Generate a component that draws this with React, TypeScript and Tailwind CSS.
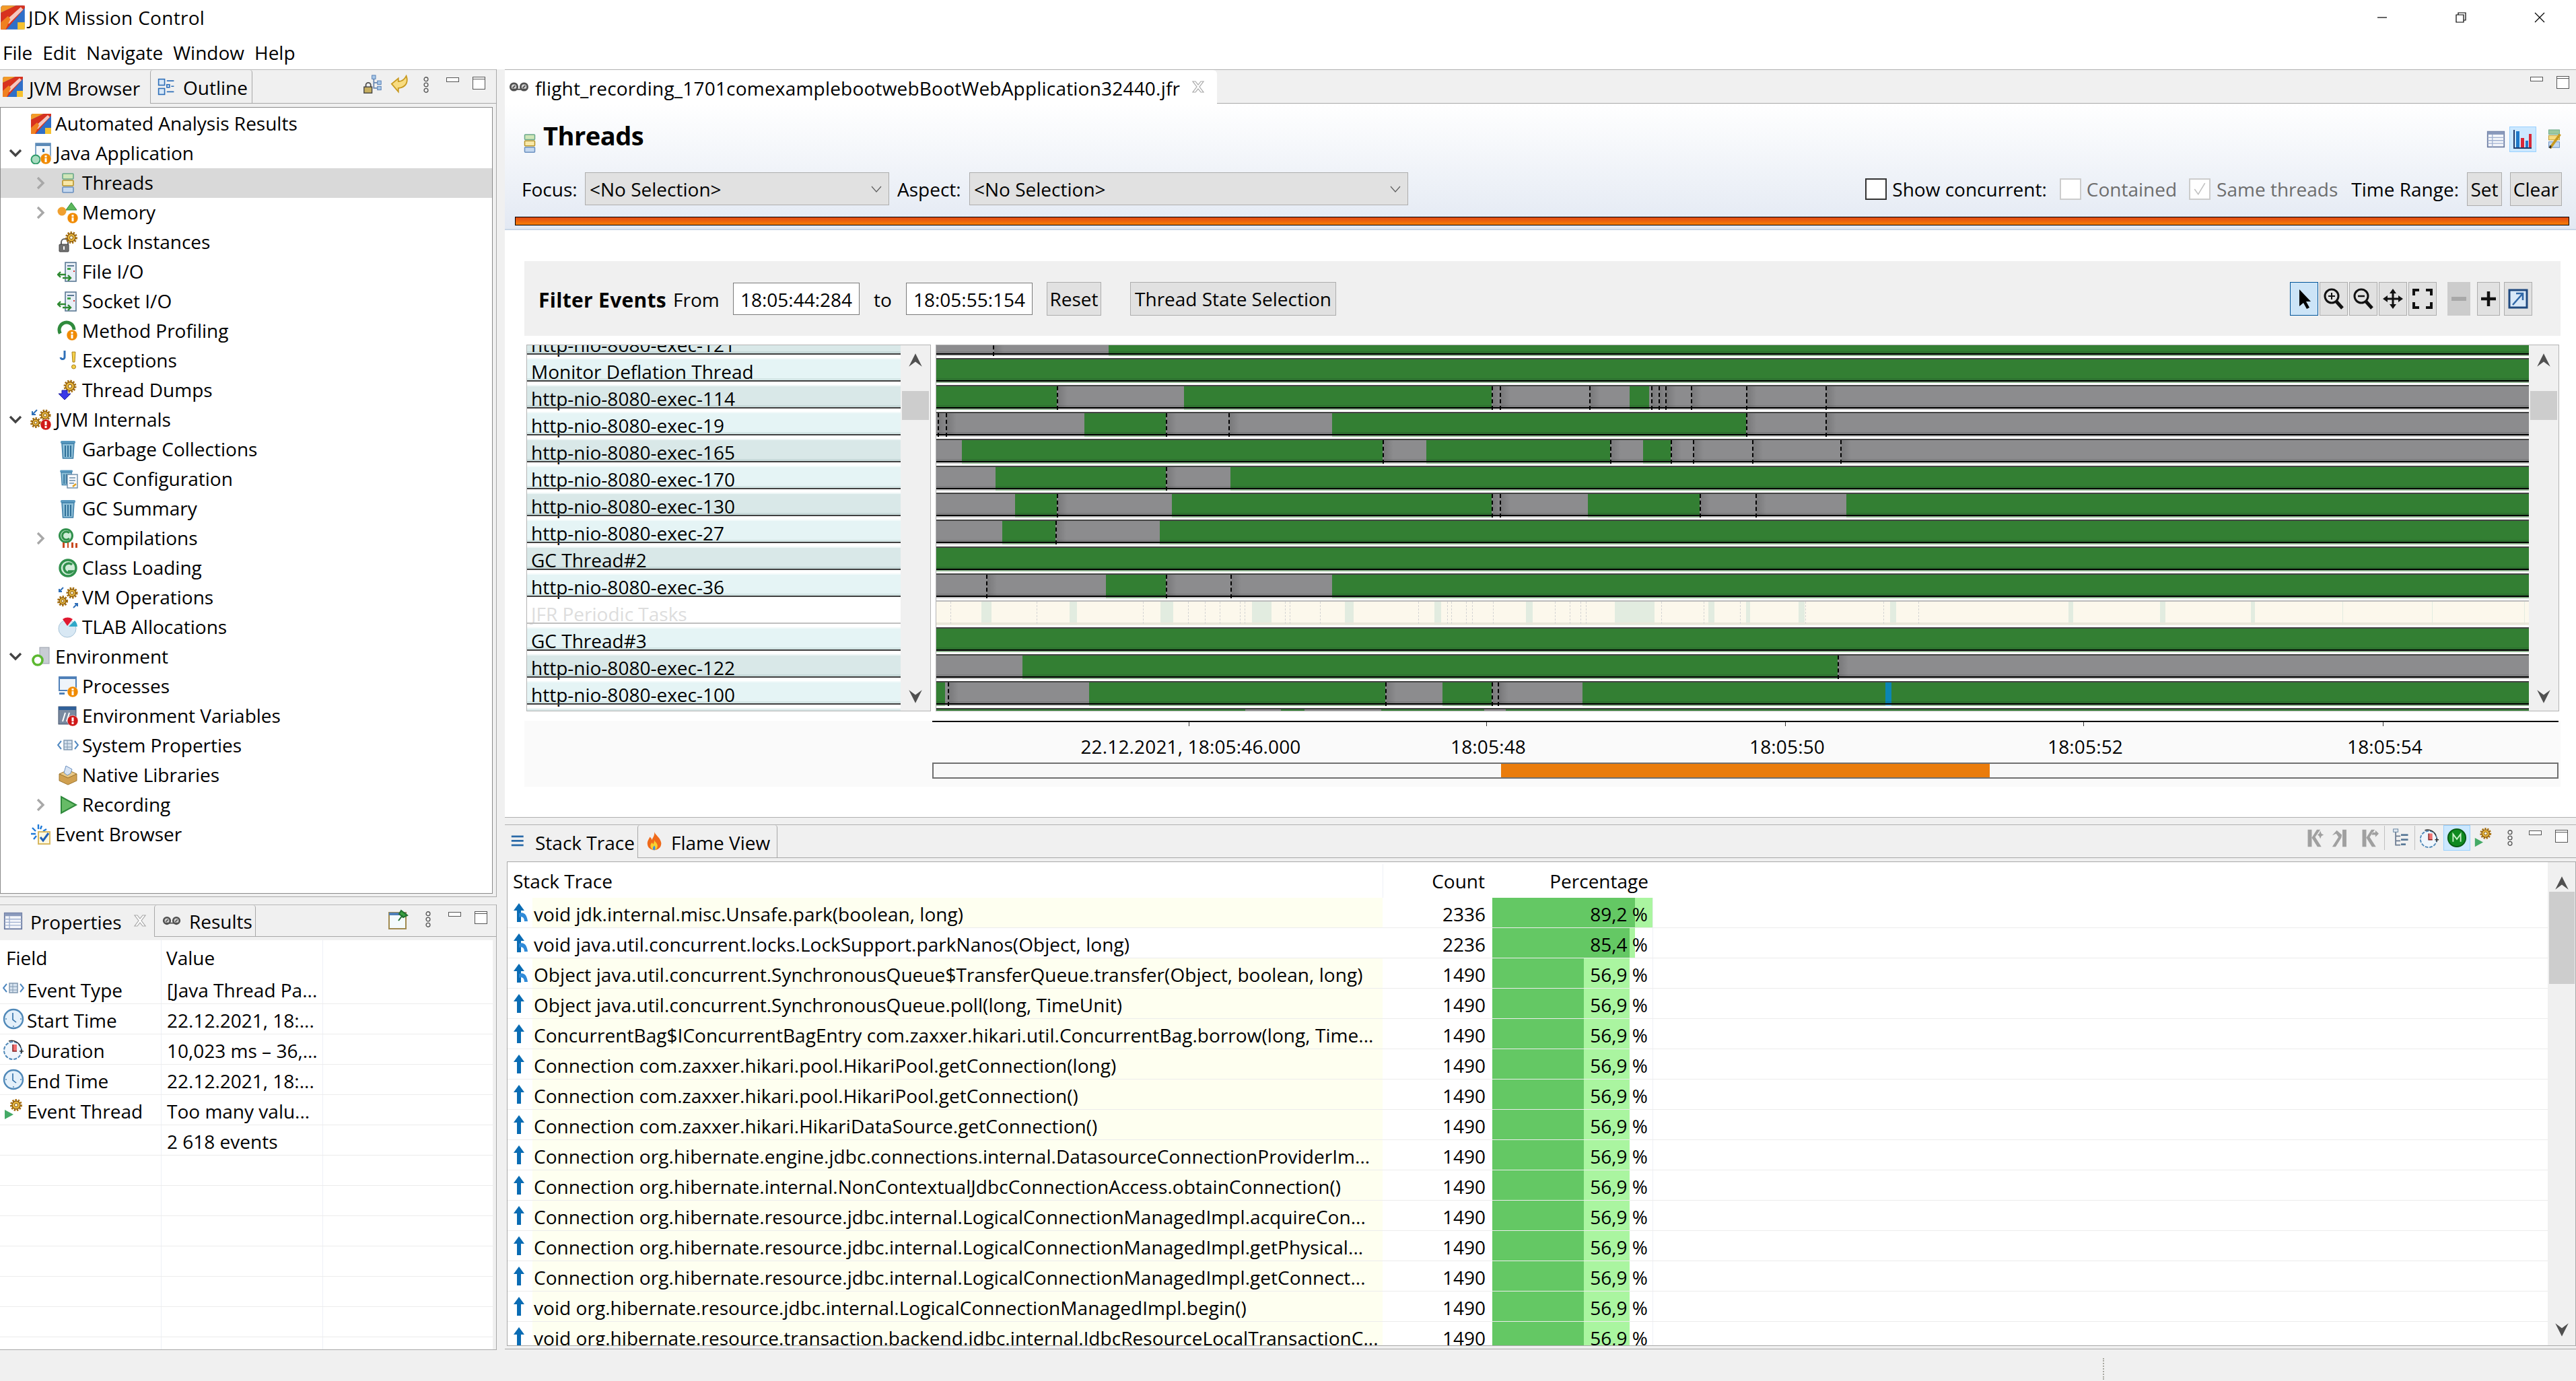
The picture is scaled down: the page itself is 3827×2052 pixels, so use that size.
import type { ReactNode } from "react";

type Kind = "g" | "a" | "b" | "c" | "s";
type ThreadRow = { name: string; segs: [Kind, number][]; ticks?: number[]; tone?: "light" | "dark" | "off" };

const CHART_START = 1391;
const CHART_END = 3757;

const fillClass: Record<Kind, string> = {
  g: "bg-[#337f33] border-b-[3px] border-[#2e7230]",
  a: "bg-[#8c8c8e] border-b-[3px] border-[#808082]",
  b: "bg-[#0b86b5] border-b-[3px] border-[#0b7aa5]",
  c: "bg-[#fcf8ec]",
  s: "bg-[#e2ece0]",
};

const fadeClass: Record<Kind, string> = {
  g: "bg-[#8fb38f]",
  a: "bg-[#c4c4c4]",
  b: "bg-[#7fc0dc]",
  c: "bg-[#eeebdd]",
  s: "bg-[#e6ebdd]",
};

const periodic: [Kind, number][] = [
  ["c", 1458], ["s", 1473], ["c", 1589], ["s", 1600], ["c", 1724], ["s", 1743], ["c", 1860], ["s", 1889],
  ["c", 1998], ["s", 2011], ["c", 2131], ["s", 2141], ["c", 2267], ["s", 2277], ["c", 2399], ["s", 2458],
  ["c", 2538], ["s", 2547], ["c", 2594], ["s", 2600], ["c", 2672], ["s", 2681], ["c", 2808], ["s", 2817],
  ["c", 3073], ["s", 3080], ["c", 3209], ["s", 3217], ["c", 3344], ["s", 3350], ["c", 3480], ["s", 3481],
  ["c", 3613], ["s", 3614], ["c", 3750], ["s", 3751], ["c", CHART_END],
];

const threads: ThreadRow[] = [
  { name: "http-nio-8080-exec-121", tone: "dark", segs: [["a", 1647], ["g", CHART_END]], ticks: [1475] },
  { name: "Monitor Deflation Thread", segs: [["g", CHART_END]] },
  {
    name: "http-nio-8080-exec-114",
    tone: "dark",
    segs: [["g", 1570], ["a", 1759], ["g", 2216], ["a", 2421], ["g", 2450], ["a", CHART_END]],
    ticks: [1570, 2216, 2228, 2361, 2453, 2464, 2474, 2512, 2594, 2712],
  },
  {
    name: "http-nio-8080-exec-19",
    segs: [["a", 1611], ["g", 1732], ["a", 1979], ["g", 2594], ["a", CHART_END]],
    ticks: [1393, 1405, 1732, 1825, 2594, 2712],
  },
  {
    name: "http-nio-8080-exec-165",
    tone: "dark",
    segs: [["a", 1429], ["g", 2054], ["a", 2119], ["g", 2392], ["a", 2441], ["g", 2482], ["a", CHART_END]],
    ticks: [2054, 2392, 2482, 2515, 2603, 2734],
  },
  { name: "http-nio-8080-exec-170", segs: [["a", 1479], ["g", 1732], ["a", 1828], ["g", CHART_END]], ticks: [1732] },
  {
    name: "http-nio-8080-exec-130",
    tone: "dark",
    segs: [["a", 1508], ["g", 1570], ["a", 1741], ["g", 2216], ["a", 2359], ["g", 2525], ["a", 2743], ["g", CHART_END]],
    ticks: [1570, 2216, 2228, 2525, 2608],
  },
  { name: "http-nio-8080-exec-27", segs: [["a", 1489], ["g", 1568], ["a", 1723], ["g", CHART_END]], ticks: [1568] },
  { name: "GC Thread#2", tone: "dark", segs: [["g", CHART_END]] },
  { name: "http-nio-8080-exec-36", segs: [["a", 1643], ["g", 1732], ["a", 1979], ["g", CHART_END]], ticks: [1465, 1732, 1828] },
  { name: "JFR Periodic Tasks", tone: "off", segs: periodic },
  { name: "GC Thread#3", segs: [["g", CHART_END]] },
  { name: "http-nio-8080-exec-122", tone: "dark", segs: [["a", 1519], ["g", 2730], ["a", CHART_END]], ticks: [2730] },
  {
    name: "http-nio-8080-exec-100",
    segs: [["g", 1404], ["a", 1618], ["g", 2058], ["a", 2143], ["g", 2216], ["a", 2351], ["g", 2801], ["b", 2810], ["g", CHART_END]],
    ticks: [1408, 2058, 2216, 2225],
  },
  {
    name: "",
    tone: "dark",
    segs: [["g", 1850], ["a", 1903], ["g", 1938], ["a", 2052], ["g", 2205], ["a", 2237], ["g", CHART_END]],
  },
];

const periodicTicks = [
  1412, 1540, 1698, 1765, 1790, 1812, 1842, 1849, 1909, 1916, 1961, 2107, 2150, 2156, 2178, 2187, 2218, 2310, 2332,
  2348, 2356, 2468, 2531, 2585, 2682, 2798, 2850,
];

const stack: [string, number, string, number, number][] = [
  ["void jdk.internal.misc.Unsafe.park(boolean, long)", 2336, "89,2", 212, 26],
  ["void java.util.concurrent.locks.LockSupport.parkNanos(Object, long)", 2236, "85,4", 204, 8],
  ["Object java.util.concurrent.SynchronousQueue$TransferQueue.transfer(Object, boolean, long)", 1490, "56,9", 136, 68],
  ["Object java.util.concurrent.SynchronousQueue.poll(long, TimeUnit)", 1490, "56,9", 136, 68],
  ["ConcurrentBag$IConcurrentBagEntry com.zaxxer.hikari.util.ConcurrentBag.borrow(long, Time...", 1490, "56,9", 136, 68],
  ["Connection com.zaxxer.hikari.pool.HikariPool.getConnection(long)", 1490, "56,9", 136, 68],
  ["Connection com.zaxxer.hikari.pool.HikariPool.getConnection()", 1490, "56,9", 136, 68],
  ["Connection com.zaxxer.hikari.HikariDataSource.getConnection()", 1490, "56,9", 136, 68],
  ["Connection org.hibernate.engine.jdbc.connections.internal.DatasourceConnectionProviderIm...", 1490, "56,9", 136, 68],
  ["Connection org.hibernate.internal.NonContextualJdbcConnectionAccess.obtainConnection()", 1490, "56,9", 136, 68],
  ["Connection org.hibernate.resource.jdbc.internal.LogicalConnectionManagedImpl.acquireCon...", 1490, "56,9", 136, 68],
  ["Connection org.hibernate.resource.jdbc.internal.LogicalConnectionManagedImpl.getPhysical...", 1490, "56,9", 136, 68],
  ["Connection org.hibernate.resource.jdbc.internal.LogicalConnectionManagedImpl.getConnect...", 1490, "56,9", 136, 68],
  ["void org.hibernate.resource.jdbc.internal.LogicalConnectionManagedImpl.begin()", 1490, "56,9", 136, 68],
  ["void org.hibernate.resource.transaction.backend.jdbc.internal.JdbcResourceLocalTransactionC...", 1490, "56,9", 136, 68],
];

const axisLabels: [number, string][] = [
  [1769, "22.12.2021, 18:05:46.000"],
  [2211, "18:05:48"],
  [2655, "18:05:50"],
  [3098, "18:05:52"],
  [3543, "18:05:54"],
];

function Info({ x = 24, y = 24, c = "#f08a00" }: { x?: number; y?: number; c?: string }) {
  const red = c !== "#f08a00";
  return (
    <g>
      <circle cx={x} cy={y} r={8} fill={c} stroke="#fff" strokeOpacity={0.5} />
      {red ? (
        <>
          <rect x={x - 1.5} y={y - 5} width={3} height={6} fill="#fff" />
          <rect x={x - 1.5} y={y + 2} width={3} height={3} fill="#fff" />
        </>
      ) : (
        <>
          <rect x={x - 1.5} y={y - 5} width={3} height={3} fill="#fff" />
          <rect x={x - 1.5} y={y - 1} width={3} height={6} fill="#fff" />
        </>
      )}
    </g>
  );
}

function Gear({ x, y, r = 6 }: { x: number; y: number; r?: number }) {
  return (
    <g>
      <circle cx={x} cy={y} r={r + 1.5} fill="none" stroke="#a8700f" strokeWidth={3} strokeDasharray="2.4 1.8" />
      <circle cx={x} cy={y} r={r} fill="#e9b83c" stroke="#8a5a10" strokeWidth={1.4} />
      <circle cx={x} cy={y} r={r / 2.4} fill="#fff6d8" stroke="#7a5010" />
    </g>
  );
}

function Trash() {
  return (
    <g>
      <rect x={5} y={3} width={22} height={4} rx={1.5} fill="#5a9ac0" />
      <path d="M7 7h18l-1.5 22h-15z" fill="#8fc0d8" stroke="#3c7ea8" strokeWidth={1.5} />
      <path d="M12 10v17M16 10v17M20 10v17" stroke="#2f6f98" strokeWidth={2} />
    </g>
  );
}

function Server() {
  return (
    <g>
      <rect x={12} y={2} width={16} height={28} fill="#e8eef6" stroke="#5a7894" strokeWidth={1.6} />
      <rect x={15} y={6} width={10} height={2} fill="#5a7894" />
      <rect x={15} y={10} width={5} height={3} fill="#3ea04a" />
      <rect x={24} y={14} width={2} height={2} fill="#d83030" />
      <path d="M1 20h12M5 16l-4 4 4 4M8 25h12M16 21l4 4-4 4" stroke="#2e8a32" strokeWidth={2.4} fill="none" />
    </g>
  );
}

function Logo() {
  return (
    <g>
      <rect x={1} y={1} width={30} height={30} rx={3} fill="#2f6fc8" />
      <path d="M1 10 20 1h-16Q1 1 1 5z" fill="#f39a28" />
      <path d="M1 10 20 1l11 0v3L8 31H1z" fill="#d8321e" />
      <path d="M7 20 26 3l3 3L11 24z" fill="#f4c8c0" />
      <path d="M22 22h9v9h-9z" fill="#f6c230" />
      <path d="M1 22 10 14l3 4-6 13H1z" fill="#f08020" />
    </g>
  );
}

const icons: Record<string, ReactNode> = {
  logo: <Logo />,
  threads: (
    <g strokeWidth={1.6}>
      <rect x={8} y={2} width={16} height={8} rx={1} fill="#cfe6b8" stroke="#6aa88a" />
      <rect x={8} y={12} width={16} height={8} rx={1} fill="#f8e8a8" stroke="#b8952a" />
      <rect x={8} y={22} width={16} height={8} rx={1} fill="#c4d8f0" stroke="#6a90c0" />
    </g>
  ),
  java: (
    <g>
      <rect x={8} y={1} width={22} height={22} fill="#f4f8fc" stroke="#5b8ab8" strokeWidth={1.5} />
      <rect x={8} y={1} width={22} height={4} fill="#5b8ab8" />
      <rect x={18} y={9} width={3} height={5} fill="#2f6fa8" />
      <circle cx={8} cy={25} r={6.5} fill="#a8dcc0" stroke="#2f9a68" strokeWidth={2} />
      <Info x={23} y={24} />
    </g>
  ),
  memory: (
    <g>
      <circle cx={7} cy={14} r={6.5} fill="#f0a030" />
      <path d="M21 1l8 11H13z" fill="#5cb85c" stroke="#2f8a3c" />
      <Info x={23} y={24} />
    </g>
  ),
  lock: (
    <g>
      <path d="M6 20v-4a5 5 0 0 1 10 0v4" fill="none" stroke="#606060" strokeWidth={2} />
      <rect x={3} y={19} width={14} height={11} rx={1} fill="#707070" stroke="#404040" />
      <rect x={9} y={22} width={2} height={5} fill="#fff" />
      <Gear x={21} y={9} />
    </g>
  ),
  server: <Server />,
  method: (
    <g>
      <circle cx={14} cy={14} r={11} fill="none" stroke="#2f8a3c" strokeWidth={5} strokeDasharray="40 30" transform="rotate(150 14 14)" />
      <Info x={22} y={22} />
    </g>
  ),
  exceptions: (
    <g>
      <path d="M11 1v9a3 3 0 0 1-6 1" fill="none" stroke="#3070b8" strokeWidth={3} />
      <path d="M22 3h5l-1 15h-3z" fill="#f5d04a" stroke="#a8801a" />
      <circle cx={24.5} cy={25} r={3} fill="#f5d04a" stroke="#a8801a" />
    </g>
  ),
  dump: (
    <g>
      <Gear x={19} y={10} r={6.5} />
      <path d="M7 16h8v5h5l-9 9-9-9h5z" fill="#3a3ae8" stroke="#2020a0" />
    </g>
  ),
  internals: (
    <g>
      <Gear x={8} y={20} r={5} />
      <Gear x={22} y={9} r={5.5} />
      <path d="M10 1 3 8M3 3v5h5" stroke="#2f6fb8" strokeWidth={2} fill="none" />
      <Info x={23} y={23} c="#d01818" />
    </g>
  ),
  trash: <Trash />,
  gcconfig: (
    <g>
      <g transform="scale(.85)"><Trash /></g>
      <rect x={15} y={9} width={15} height={20} fill="#f8fafc" stroke="#6a8aa8" strokeWidth={1.4} />
      <path d="M18 14h9M18 18h9M18 22h7" stroke="#6a8aa8" strokeWidth={1.5} />
      <path d="M23 27l5-4" stroke="#e0a020" strokeWidth={2.5} />
    </g>
  ),
  compile: (
    <g>
      <circle cx={13} cy={12} r={9.5} fill="#d0ecd8" stroke="#30904c" strokeWidth={3} />
      <path d="M18 8a6 6 0 1 0 0 8" fill="none" stroke="#309048" strokeWidth={3} />
      <rect x={8} y={22} width={3} height={8} fill="#c84a20" />
      <rect x={15} y={22} width={2} height={8} fill="#c84a20" />
      <rect x={21} y={22} width={3} height={8} fill="#c84a20" />
      <rect x={27} y={23} width={3} height={7} fill="#c84a20" />
    </g>
  ),
  classload: (
    <g>
      <circle cx={16} cy={16} r={12} fill="#d0ecd8" stroke="#30904c" strokeWidth={3.4} />
      <path d="M22 11a7 7 0 1 0 0 10h-6" fill="none" stroke="#30904c" strokeWidth={3.6} />
    </g>
  ),
  vmops: (
    <g>
      <Gear x={8} y={21} r={5} />
      <Gear x={22} y={9} r={5.5} />
      <path d="M9 1 3 7M3 3v4h4M24 31l6-6M30 29v-4h-4" stroke="#2f6fb8" strokeWidth={2} fill="none" />
    </g>
  ),
  tlab: (
    <g>
      <circle cx={15} cy={18} r={13} fill="#d8e8f4" stroke="#a8c4d8" />
      <path d="M15 14 8 4a14 14 0 0 1 15 0z" fill="#e01830" />
      <path d="M17 15 26 6a14 14 0 0 1 4 9z" fill="#30a8c8" />
    </g>
  ),
  env: (
    <g>
      <rect x={14} y={2} width={14} height={24} fill="#c8ccd4" stroke="#9aa0ac" />
      <circle cx={11} cy={21} r={7} fill="#fff" stroke="#5cb830" strokeWidth={3.6} />
    </g>
  ),
  processes: (
    <g>
      <rect x={3} y={2} width={25} height={20} fill="#eef4fa" stroke="#4f80b8" strokeWidth={2} />
      <rect x={3} y={2} width={25} height={3} fill="#4f80b8" />
      <rect x={3} y={25} width={8} height={3} fill="#4f80b8" />
      <Info x={23} y={24} />
    </g>
  ),
  envvars: (
    <g>
      <rect x={2} y={2} width={26} height={26} fill="#7a8aa0" stroke="#40506a" />
      <rect x={2} y={2} width={26} height={5} fill="#2f5f98" />
      <path d="M8 24 12 11M14 24l4-13" stroke="#fff" strokeWidth={2} />
      <Info x={23} y={23} c="#d01818" />
    </g>
  ),
  props: (
    <g fill="none" stroke="#4f88c0" strokeWidth={2}>
      <path d="M6 9 1 15l5 6M26 9l5 6-5 6" />
      <rect x={10} y={8} width={12} height={14} fill="#d8e4f0" stroke="#8098b0" strokeWidth={1.5} />
      <path d="M10 13h12M10 18h12M15 8v14" stroke="#8098b0" strokeWidth={1} />
    </g>
  ),
  native: (
    <g>
      <path d="M3 14 16 8l13 6-13 6z" fill="#e8c888" stroke="#a07830" />
      <path d="M3 14v10l13 6 13-6V14l-13 6z" fill="#d0a050" stroke="#a07830" />
      <path d="M10 12 13 2l9 5-2 6-5 3z" fill="#d8e4f4" stroke="#6a90c0" />
    </g>
  ),
  recording: <path d="M6 4 28 16 6 28z" fill="#66bb66" stroke="#2f8a3c" strokeWidth={2} />,
  eventbrowser: (
    <g>
      <path d="M12 1v7M3 6l5 5M1 15h7M5 23l4-5M17 3l-2 5M24 8l-5 3" stroke="#1f7ad8" strokeWidth={2.4} />
      <rect x={12} y={12} width={17} height={18} fill="#fff8e0" stroke="#d8b860" strokeWidth={2} />
      <path d="M15 20l4 5 8-11" fill="none" stroke="#2060b8" strokeWidth={3} />
    </g>
  ),
  table: (
    <g>
      <rect x={2} y={3} width={28} height={26} fill="#f4f6fa" stroke="#6a7aa0" strokeWidth={2} />
      <rect x={2} y={3} width={28} height={5} fill="#8a9abc" />
      <path d="M2 13h28M2 18h28M2 23h28M10 8v21" stroke="#a0b0d0" strokeWidth={1.5} />
    </g>
  ),
  tape: (
    <g fill="#d0d0d0" stroke="#505050" strokeWidth={3}>
      <circle cx={8} cy={16} r={5.5} />
      <circle cx={24} cy={16} r={5.5} />
      <path d="M5 20h22M6 18l4-4M22 18l4-4" strokeWidth={2} />
    </g>
  ),
  clock: (
    <g>
      <circle cx={16} cy={16} r={14} fill="#e4f0fa" stroke="#4f88b8" strokeWidth={2.4} />
      <path d="M15 7v10l5 4" fill="none" stroke="#2f6fa8" strokeWidth={1.6} />
      <path d="M16 26v2M6 16H4M28 16h-2" stroke="#4f88b8" strokeWidth={1.5} />
    </g>
  ),
  stopwatch: (
    <g>
      <circle cx={15} cy={18} r={13} fill="#f0f6fc" stroke="#4f88b8" strokeWidth={2} strokeDasharray="5 2" />
      <path d="M9 4a14 14 0 0 1 18 10" fill="none" stroke="#303030" strokeWidth={1.5} />
      <path d="M15 9h6v10h-6z" fill="#f07070" />
      <path d="M15 9v10h6" fill="none" stroke="#802020" strokeWidth={1.5} />
      <path d="M28 16v6M25 19h6" stroke="#303030" strokeWidth={1.5} />
    </g>
  ),
  gearplay: (
    <g>
      <path d="M3 16 16 23 3 30z" fill="#44aa66" />
      <Gear x={20} y={9} r={6} />
    </g>
  ),
  pin: (
    <g>
      <rect x={2} y={6} width={25} height={24} fill="#f4fafc" stroke="#a08a50" strokeWidth={2} />
      <rect x={2} y={6} width={25} height={4} fill="#4f80b8" />
      <path d="M16 18 22 10M20 3l9 7-6 3-6-5z" fill="#3aa040" stroke="#207030" strokeWidth={2} />
    </g>
  ),
  outline: (
    <g fill="#d8e8f8" stroke="#2f6fb8" strokeWidth={2}>
      <rect x={2} y={2} width={11} height={11} />
      <rect x={2} y={19} width={11} height={11} />
      <rect x={17} y={12} width={5} height={5} />
      <path d="M17 5h13M17 25h13M25 15h5" fill="none" />
    </g>
  ),
  locktree: (
    <g>
      <path d="M5 21v-4a4 4 0 0 1 8 0v4" fill="none" stroke="#505050" strokeWidth={2} />
      <rect x={2} y={20} width={13} height={10} fill="#c8b060" stroke="#404040" strokeWidth={1.5} />
      <path d="M18 6v16h6M18 13h6" fill="none" stroke="#6a88b0" strokeWidth={2} />
      <rect x={15} y={1} width={6} height={6} fill="#a8c8e8" stroke="#4f78b0" />
      <rect x={24} y={10} width={6} height={6} fill="#a8c8e8" stroke="#4f78b0" />
      <rect x={24} y={19} width={6} height={6} fill="#a8c8e8" stroke="#4f78b0" />
    </g>
  ),
  backarrow: (
    <path d="M2 15 13 6v5c6 0 10-3 13-9 3 8 1 16-8 19-2 1-4 1-5 1v6z" fill="#f8dc80" stroke="#c89a20" strokeWidth={2} />
  ),
  chart: (
    <g>
      <path d="M3 2v27h26" fill="none" stroke="#203a6a" strokeWidth={2} />
      <rect x={6} y={4} width={5} height={24} fill="#1f78c8" />
      <rect x={13} y={14} width={5} height={14} fill="#d82838" />
      <rect x={20} y={18} width={4} height={10} fill="#1f78c8" />
      <rect x={25} y={8} width={4} height={20} fill="#d82838" />
    </g>
  ),
  threadedit: (
    <g>
      <rect x={8} y={1} width={17} height={7} fill="#9cc8a0" stroke="#6aa88a" />
      <rect x={8} y={10} width={17} height={7} fill="#f8dc80" stroke="#b8952a" />
      <rect x={8} y={20} width={17} height={9} fill="#c4d8f0" stroke="#6a90c0" />
      <path d="M10 30 26 8" stroke="#c89a20" strokeWidth={4} />
      <path d="M10 30l1-4" stroke="#303030" strokeWidth={3} />
    </g>
  ),
  pointer: <path d="M9 2v25l6-5 5 9 4-2-5-9h7z" fill="#000" />,
  zoomin: (
    <g fill="none" stroke="#111" strokeWidth={3}>
      <circle cx={13} cy={12} r={10} />
      <path d="M20 20l9 10" strokeWidth={5} />
      <path d="M13 7v10M8 12h10" strokeWidth={2} />
    </g>
  ),
  zoomout: (
    <g fill="none" stroke="#111" strokeWidth={3}>
      <circle cx={13} cy={12} r={10} />
      <path d="M20 20l9 10" strokeWidth={5} />
      <path d="M8 12h10" strokeWidth={2.5} />
    </g>
  ),
  move: (
    <g fill="#111">
      <path d="M16 1l5 7h-10zM16 31l-5-7h10zM1 16l7-5v10zM31 16l-7 5V11z" />
      <path d="M16 6v20M6 16h20" stroke="#111" strokeWidth={3} />
    </g>
  ),
  fit: <path d="M11 3H3v8M21 3h8v8M11 29H3v-8M21 29h8v-8" fill="none" stroke="#111" strokeWidth={4} />,
  minus: <path d="M5 16h22" stroke="#a8a8a8" strokeWidth={6} />,
  plus: <path d="M5 16h22M16 5v22" stroke="#111" strokeWidth={4.5} />,
  export: (
    <g>
      <rect x={3} y={3} width={26} height={26} fill="#d8e8f8" stroke="#204a80" strokeWidth={3} />
      <path d="M8 25 23 8M13 8h10v10" fill="none" stroke="#3068a8" strokeWidth={2.6} />
    </g>
  ),
  stacklines: <path d="M1 6h22M1 14h22M1 22h22" stroke="#2a6aa8" strokeWidth={3.5} />,
  flame: (
    <g>
      <path d="M15 1c2 6 10 9 11 18 0 7-5 11-11 11S4 26 4 19c0-4 3-7 4-10 2 2 3 3 3 5 2-4 5-8 4-13z" fill="#ef6a1a" />
      <path d="M15 14c1 3 5 5 5 9 0 4-2 7-5 7s-6-3-6-7c0-2 1-3 2-5 1 1 2 1 2 3 1-2 2-4 2-7z" fill="#f8d030" />
      <path d="M15 23c2 2 2 7 0 7-3 0-3-4 0-7z" fill="#3a8ae0" />
    </g>
  ),
  stepa: <path d="M3 1h7v30H3zM10 15 20 31h7L16 14l9-13h-6zM25 3l2 5 4 2-4 2-2 5-2-5-3-2 3-2z" fill="#a0a0a0" />,
  stepb: <path d="M19 1h7v30h-7zM17 15 7 31H1l11-17L8 8l-7 3 8-9 9 8z" fill="#a0a0a0" />,
  stepc: <path d="M3 1h7v30H3zM10 15 20 31h7L16 14l9-13h-6zM20 6h6V2l6 6-6 6v-4h-6z" fill="#a0a0a0" />,
  tree: (
    <g>
      <path d="M7 4v24h8M7 13h8M7 21h8" fill="none" stroke="#6a7a90" strokeWidth={2} />
      <rect x={3} y={1} width={8} height={5} fill="#e0e8f0" stroke="#5a7a98" />
      <path d="M16 11h12M16 19h12M16 27h8" stroke="#5a7a98" strokeWidth={3} />
    </g>
  ),
  method2: (
    <g>
      <circle cx={16} cy={16} r={14} fill="#0f8a20" stroke="#085a12" strokeWidth={2} />
      <path d="M10 22V10l6 8 6-8v12" fill="none" stroke="#c8f0c8" strokeWidth={2} />
    </g>
  ),
};

function Ic({ n, s = 32 }: { n: string; s?: number }) {
  return (
    <svg viewBox="0 0 32 32" width={s} height={s} className="shrink-0">
      {icons[n]}
    </svg>
  );
}

function Kebab() {
  return (
    <svg viewBox="0 0 12 30" width={10} height={28} className="shrink-0">
      <g fill="none" stroke="#555" strokeWidth={1.6}>
        <circle cx={6} cy={5} r={3.5} />
        <circle cx={6} cy={15} r={3.5} />
        <circle cx={6} cy={25} r={3.5} />
      </g>
    </svg>
  );
}

function MinMax() {
  return (
    <div className="flex -translate-y-[3px] items-start gap-[20px] pt-[1px]">
      <div className="mt-[1px] h-[7px] w-[19px] border border-[#555] bg-white" />
      <div className="h-[19px] w-[19px] border border-[#555] bg-white">
        <div className="h-[3px] border-b border-[#555]" />
      </div>
    </div>
  );
}

function CloseX() {
  return (
    <svg viewBox="0 0 20 20" width={20} height={20} className="shrink-0">
      <path d="M2 2h4l4 5 4-5h4l-6 8 6 8h-4l-4-5-4 5H2l6-8z" fill="#fff" stroke="#a8a8a8" strokeWidth={1.2} />
    </svg>
  );
}

function ChevY({ down }: { down?: boolean }) {
  return (
    <svg viewBox="0 0 18 18" width={22} height={22} className={down ? "rotate-180" : ""}>
      <path d="M1 17 9 1l8 16-8-6z" fill="#505050" />
    </svg>
  );
}

function Tree({ level, open, icon, label, selected }: { level: 0 | 1; open?: boolean; icon: string; label: string; selected?: boolean }) {
  return (
    <div className={`flex h-[44px] items-center ${selected ? "bg-[#d9d9d9]" : ""}`}>
      <div className={level === 0 ? "flex w-[44px] justify-center" : "flex w-[84px] justify-end pr-[17px]"}>
        {open === true && (
          <svg viewBox="0 0 20 14" width={20} height={14}>
            <path d="M2 2l8 8 8-8" fill="none" stroke="#444" strokeWidth={3.4} />
          </svg>
        )}
        {open === false && (
          <svg viewBox="0 0 14 20" width={14} height={20}>
            <path d="M2 2l8 8-8 8" fill="none" stroke="#a8a8a8" strokeWidth={3.4} />
          </svg>
        )}
      </div>
      <Ic n={icon} />
      <span className="ml-[5px] pb-[3px] whitespace-nowrap">{label}</span>
    </div>
  );
}

function Btn({ children, w, h = "h-[50px]" }: { children: ReactNode; w: string; h?: string }) {
  return (
    <div className={`flex ${h} ${w} items-center justify-center border border-[#adadad] bg-[#e1e1e1] whitespace-nowrap`}>
      {children}
    </div>
  );
}

function Tool({ n, selected, disabled, w = "w-[42px]" }: { n: string; selected?: boolean; disabled?: boolean; w?: string }) {
  return (
    <div
      className={`flex h-[50px] ${w} items-center justify-center border ${
        selected ? "border-[#005499] bg-[#cce4f7]" : disabled ? "border-[#cccccc] bg-[#cccccc]" : "border-[#adadad] bg-[#e1e1e1]"
      }`}
    >
      <Ic n={n} s={32} />
    </div>
  );
}

function Combo({ w }: { w: string }) {
  return (
    <div className={`flex h-[49px] ${w} items-center justify-between border border-[#adadad] bg-[#e1e1e1] pl-[6px] pr-[10px]`}>
      <span>&lt;No Selection&gt;</span>
      <svg viewBox="0 0 16 10" width={16} height={10}>
        <path d="M1 1l7 8 7-8" fill="none" stroke="#606060" strokeWidth={1.2} />
      </svg>
    </div>
  );
}

function Check({ dark, checked }: { dark?: boolean; checked?: boolean }) {
  return (
    <div className={`flex h-[32px] w-[32px] items-center justify-center border-2 bg-white ${dark ? "border-[#333]" : "border-[#cccccc]"}`}>
      {checked && (
        <svg viewBox="0 0 20 20" width={22} height={22}>
          <path d="M3 10l5 7L17 2" fill="none" stroke="#c0c0c0" strokeWidth={1.4} />
        </svg>
      )}
    </div>
  );
}

function Segs({ row, cls }: { row: ThreadRow; cls: Record<Kind, string> }) {
  let prev = CHART_START;
  return (
    <>
      {row.segs.map(([kind, end], i) => {
        const width = end - prev;
        prev = end;
        return <div key={i} className={`h-full ${cls[kind]}`} style={{ width }} />;
      })}
    </>
  );
}

function ChartRow({ row }: { row: ThreadRow }) {
  const off = row.tone === "off";
  const ticks = off ? periodicTicks : row.ticks ?? [];
  return (
    <div className="relative h-[40px]">
      <div className={`h-[2px] ${off ? "bg-[#bcbcbc]" : "bg-[#444444]"}`} />
      <div className="flex h-[31px]">
        <Segs row={row} cls={fillClass} />
      </div>
      <div className={`h-[2px] ${off ? "bg-[#e8e5d8]" : "bg-black"}`} />
      <div className="flex h-[2px]">
        <Segs row={row} cls={fadeClass} />
      </div>
      {ticks.map((x) =>
        off ? (
          <div key={x} className="absolute top-[2px] h-[33px] border-l border-dashed border-[#d4d4d4]" style={{ left: x - CHART_START }} />
        ) : (
          <div key={x} className="absolute top-[2px] flex h-[35px]" style={{ left: x - CHART_START }}>
            <div className="h-full border-l-2 border-dashed border-black" />
            <div className="h-[31px] w-[14px] bg-gradient-to-r from-[#00000022] to-transparent" />
          </div>
        ),
      )}
    </div>
  );
}

function LabelRow({ row }: { row: ThreadRow }) {
  const off = row.tone === "off";
  const band = off
    ? "bg-white text-[#dddddd]"
    : row.tone === "dark"
      ? "bg-[#d9e8e8] border-[#c8dada]"
      : "bg-[#e5f4f5] border-[#d4e6e6]";
  return (
    <div className="h-[40px]">
      <div className={`h-[2px] ${off ? "bg-white" : row.tone === "dark" ? "bg-[#eef6f6]" : "bg-[#f2fafa]"}`} />
      <div className={`h-[31px] border-b-[3px] pl-[6px] leading-[36px] whitespace-nowrap ${off ? "border-white" : ""} ${band}`}>{row.name}</div>
      <div className={`relative h-[2px] ${off ? "bg-[#c0c0c0]" : "bg-[#404040]"}`} />
    </div>
  );
}

function VScroll({ top, height, arrowTop, arrowBottom }: { top: number; height: number; arrowTop: number; arrowBottom: number }) {
  return (
    <div className="flex h-full w-[44px] shrink-0 flex-col items-center bg-[#f0f0f0]">
      <div className="flex w-full justify-center" style={{ paddingTop: arrowTop, height: top }}>
        <ChevY />
      </div>
      <div className="w-[40px] bg-[#cdcdcd]" style={{ height }} />
      <div className="flex-1" />
      <div style={{ paddingBottom: arrowBottom }}>
        <ChevY down />
      </div>
    </div>
  );
}

export default function App() {
  return (
    <div className="flex h-[2052px] w-[3827px] flex-col overflow-hidden bg-[#f0f0f0] font-['Open_Sans',sans-serif] text-[28px] text-black">
      {/* title + menu */}
      <div className="flex h-[52px] items-center bg-white">
        <Ic n="logo" s={38} />
        <span className="ml-[4px] whitespace-nowrap tracking-[0.3px]">JDK Mission Control</span>
        <div className="ml-auto flex items-center">
          <svg viewBox="0 0 14 14" width={14} height={14} className="mr-[102px]">
            <path d="M0 7h14" stroke="#000" strokeWidth={1.2} />
          </svg>
          <svg viewBox="0 0 16 16" width={16} height={16} className="mr-[101px]">
            <path d="M1 4h11v11H1zM4 4V1h11v11h-3" fill="none" stroke="#000" strokeWidth={1.2} />
          </svg>
          <svg viewBox="0 0 16 16" width={16} height={16} className="mr-[46px]">
            <path d="M1 1l14 14M15 1 1 15" stroke="#000" strokeWidth={1.2} />
          </svg>
        </div>
      </div>
      <div className="flex h-[51px] items-center gap-[15px] bg-white pl-[4px]">
        <span>File</span>
        <span>Edit</span>
        <span>Navigate</span>
        <span>Window</span>
        <span>Help</span>
      </div>

      <div className="flex h-[1903px]">
        {/* left column */}
        <div className="flex w-[738px] shrink-0 flex-col">
          <div className="flex h-[1230px] flex-col border-r border-b border-[#a8a8a8]">
            <div className="flex h-[51px] items-stretch border-t border-[#b8b8b8]">
              <div className="flex w-[223px] items-center gap-[8px] pl-[3px]">
                <Ic n="logo" />
                <span className="pt-[3px] whitespace-nowrap">JVM Browser</span>
              </div>
              <div className="flex w-[152px] items-center gap-[12px] rounded-t-[4px] border-x border-b border-[#a8a8a8] pl-[10px]">
                <Ic n="outline" s={26} />
                <span className="pt-[3px]">Outline</span>
              </div>
              <div className="flex flex-1 items-center border-b border-[#a8a8a8] pb-[6px] pl-[164px]">
                <Ic n="locktree" s={29} />
                <div className="ml-[12px]">
                  <Ic n="backarrow" s={29} />
                </div>
                <div className="ml-[19px] mr-[25px]">
                  <Kebab />
                </div>
                <MinMax />
              </div>
            </div>
            <div className="mb-[4px] mt-[5px] w-[732px] flex-1 border border-[#8a8a8a] bg-white pt-[2px]">
              <Tree level={0} icon="logo" label="Automated Analysis Results" />
              <Tree level={0} open icon="java" label="Java Application" />
              <Tree level={1} open={false} icon="threads" label="Threads" selected />
              <Tree level={1} open={false} icon="memory" label="Memory" />
              <Tree level={1} icon="lock" label="Lock Instances" />
              <Tree level={1} icon="server" label="File I/O" />
              <Tree level={1} icon="server" label="Socket I/O" />
              <Tree level={1} icon="method" label="Method Profiling" />
              <Tree level={1} icon="exceptions" label="Exceptions" />
              <Tree level={1} icon="dump" label="Thread Dumps" />
              <Tree level={0} open icon="internals" label="JVM Internals" />
              <Tree level={1} icon="trash" label="Garbage Collections" />
              <Tree level={1} icon="gcconfig" label="GC Configuration" />
              <Tree level={1} icon="trash" label="GC Summary" />
              <Tree level={1} open={false} icon="compile" label="Compilations" />
              <Tree level={1} icon="classload" label="Class Loading" />
              <Tree level={1} icon="vmops" label="VM Operations" />
              <Tree level={1} icon="tlab" label="TLAB Allocations" />
              <Tree level={0} open icon="env" label="Environment" />
              <Tree level={1} icon="processes" label="Processes" />
              <Tree level={1} icon="envvars" label="Environment Variables" />
              <Tree level={1} icon="props" label="System Properties" />
              <Tree level={1} icon="native" label="Native Libraries" />
              <Tree level={1} open={false} icon="recording" label="Recording" />
              <Tree level={0} icon="eventbrowser" label="Event Browser" />
            </div>
          </div>

          <div className="mt-[11px] flex h-[662px] flex-col border-r border-b border-[#a8a8a8]">
            <div className="flex h-[50px] items-stretch border-t border-[#b8b8b8]">
              <div className="flex w-[229px] items-center pl-[5px]">
                <Ic n="table" s={29} />
                <span className="ml-[11px] pt-[3px]">Properties</span>
                <div className="ml-[17px]">
                  <CloseX />
                </div>
              </div>
              <div className="flex w-[151px] items-center gap-[12px] rounded-t-[4px] border-x border-b border-[#a8a8a8] pl-[11px]">
                <Ic n="tape" s={28} />
                <span className="pt-[3px]">Results</span>
              </div>
              <div className="flex flex-1 items-center border-b border-[#a8a8a8] pb-[4px] pl-[196px]">
                <Ic n="pin" s={32} />
                <div className="ml-[23px] mr-[25px]">
                  <Kebab />
                </div>
                <MinMax />
              </div>
            </div>
            <div className="mt-[5px] w-[732px] overflow-hidden bg-white">
              <div className="flex h-[50px] items-center">
                <div className="w-[240px] border-r border-[#eef0f6] pl-[9px] pt-[3px] leading-[47px]">Field</div>
                <div className="w-[240px] border-r border-[#eef0f6] pl-[7px] pt-[3px] leading-[47px]">Value</div>
              </div>
              {[
                ["props", "Event Type", "[Java Thread Pa..."],
                ["clock", "Start Time", "22.12.2021, 18:..."],
                ["stopwatch", "Duration", "10,023 ms – 36,..."],
                ["clock", "End Time", "22.12.2021, 18:..."],
                ["gearplay", "Event Thread", "Too many valu..."],
                ["", "", "2 618 events"],
                ["", "", ""],
                ["", "", ""],
                ["", "", ""],
                ["", "", ""],
                ["", "", ""],
                ["", "", ""],
                ["", "", ""],
              ].map(([icon, field, value], i) => (
                <div key={i} className="flex h-[45px] border-b border-[#ececec]">
                  <div className="flex w-[240px] items-center border-r border-[#eef0f6] pl-[4px]">
                    {icon && <Ic n={icon} />}
                    <span className="ml-[4px] pt-[5px] whitespace-nowrap">{field}</span>
                  </div>
                  <div className="flex w-[240px] items-center border-r border-[#eef0f6] pl-[8px] pt-[5px] whitespace-nowrap">{value}</div>
                </div>
              ))}
            </div>
          </div>
        </div>

        {/* right column */}
        <div className="ml-[12px] flex min-w-0 flex-1 flex-col">
          <div className="flex h-[1112px] flex-col border-b border-[#b0b0b0] bg-white">
            <div className="flex h-[51px] items-stretch border-t border-[#b0b0b0] bg-[#f0f0f0]">
              <div className="flex w-[1058px] items-center rounded-tr-[6px] bg-white pl-[6px]">
                <Ic n="tape" s={30} />
                <span className="ml-[9px] pt-[3px] tracking-[0.2px] whitespace-nowrap">flight_recording_1701comexamplebootwebBootWebApplication32440.jfr</span>
                <div className="ml-[17px]">
                  <CloseX />
                </div>
              </div>
              <div className="flex flex-1 items-start justify-end border-b border-[#a8a8a8] pr-[10px] pt-[11px]">
                <MinMax />
              </div>
            </div>

            <div className="h-[188px] border-b-2 border-[#c9d7e6] bg-gradient-to-b from-white to-[#e3e9f3]">
              <div className="flex h-[102px] items-center pl-[22px] pr-[18px] pt-[3px]">
                <div className="pt-[12px]">
                  <Ic n="threads" s={30} />
                </div>
                <span className="ml-[5px] pb-[10px] text-[38px] font-bold tracking-[-0.5px]">Threads</span>
                <div className="ml-auto flex items-center gap-[6px]">
                  <Ic n="table" s={28} />
                  <div className="flex h-[38px] w-[40px] items-center justify-center border border-[#99d1ff] bg-[#cce8ff]">
                    <Ic n="chart" s={32} />
                  </div>
                  <div className="ml-[5px]">
                    <Ic n="threadedit" s={30} />
                  </div>
                </div>
              </div>
              <div className="flex h-[49px] items-center pl-[25px] pr-[21px]">
                <span className="w-[94px]">Focus:</span>
                <Combo w="w-[452px]" />
                <span className="ml-[12px] w-[107px]">Aspect:</span>
                <Combo w="w-[652px]" />
                <div className="ml-auto flex items-center">
                  <Check dark />
                  <span className="ml-[8px] whitespace-nowrap">Show concurrent:</span>
                  <div className="ml-[19px]">
                    <Check />
                  </div>
                  <span className="ml-[8px] text-[#6d6d6d]">Contained</span>
                  <div className="ml-[18px]">
                    <Check checked />
                  </div>
                  <span className="ml-[9px] whitespace-nowrap text-[#6d6d6d]">Same threads</span>
                  <span className="ml-[20px] whitespace-nowrap">Time Range:</span>
                  <div className="ml-[12px]">
                    <Btn w="w-[52px]">Set</Btn>
                  </div>
                  <div className="ml-[12px]">
                    <Btn w="w-[77px]">Clear</Btn>
                  </div>
                </div>
              </div>
              <div className="ml-[15px] mr-[10px] mt-[17px] h-[13px] border border-black bg-gradient-to-b from-[#df4712] to-[#f87f04]" />
            </div>

            <div className="mr-[23px] ml-[29px] flex flex-1 flex-col pt-[46px]">
              <div className="flex h-[111px] items-center bg-[#f0f0f0] pl-[21px] pr-[42px]">
                <span className="w-[200px] pt-[3px] text-[30px] font-bold tracking-[0.3px] whitespace-nowrap">Filter Events</span>
                <span className="w-[89px] pt-[3px]">From</span>
                <div className="flex h-[48px] w-[188px] items-center justify-center border border-[#7a7a7a] bg-white pt-[3px]">18:05:44:284</div>
                <span className="ml-[21px] w-[48px] pt-[3px]">to</span>
                <div className="flex h-[48px] w-[188px] items-center justify-center border border-[#7a7a7a] bg-white pt-[3px]">18:05:55:154</div>
                <div className="ml-[21px]">
                  <Btn w="w-[81px]">Reset</Btn>
                </div>
                <div className="ml-[43px]">
                  <Btn w="w-[306px]">Thread State Selection</Btn>
                </div>
                <div className="ml-auto flex items-center gap-[2px]">
                  <Tool n="pointer" selected />
                  <Tool n="zoomin" />
                  <Tool n="zoomout" />
                  <Tool n="move" />
                  <Tool n="fit" />
                  <div className="ml-[14px]">
                    <Tool n="minus" disabled w="w-[34px]" />
                  </div>
                  <div className="ml-[8px]">
                    <Tool n="plus" w="w-[34px]" />
                  </div>
                  <div className="ml-[4px]">
                    <Tool n="export" />
                  </div>
                </div>
              </div>

              <div className="mt-[13px] flex h-[545px] pl-[3px]">
                <div className="flex w-[601px] border border-[#b4b4b4] bg-white">
                  <div className="h-full flex-1 overflow-hidden">
                    <div className="-mt-[21px]">
                      {threads.map((row) => (
                        <LabelRow key={row.name} row={row} />
                      ))}
                    </div>
                  </div>
                  <VScroll top={68} height={43} arrowTop={11} arrowBottom={10} />
                </div>
                <div className="ml-[7px] flex w-[2412px] border border-[#b4b4b4] bg-white">
                  <div className="h-full flex-1 overflow-hidden">
                    <div className="-mt-[21px]">
                      {threads.map((row) => (
                        <ChartRow key={row.name} row={row} />
                      ))}
                    </div>
                  </div>
                  <VScroll top={68} height={43} arrowTop={11} arrowBottom={10} />
                </div>
              </div>

              <div className="mt-[14px] h-[98px] bg-[#fafafa] pl-[606px]">
                <div className="relative h-[98px] w-[2416px]">
                  <div className="h-[2px] bg-black" />
                  {axisLabels.map(([x, label]) => (
                    <div key={label}>
                      <div className="absolute top-[2px] h-[6px] w-[1px] bg-[#333]" style={{ left: x - 1385 - 3 }} />
                      <div className="absolute top-[17px] -translate-x-1/2 tracking-[0.15px] whitespace-nowrap" style={{ left: x - 1385 }}>
                        {label}
                      </div>
                    </div>
                  ))}
                  <div className="mt-[60px] flex h-[24px] border-2 border-[#707070] bg-[#f8f8f8]">
                    <div className="w-[843px]" />
                    <div className="w-[726px] bg-[#ea7c0c]" />
                  </div>
                </div>
              </div>
            </div>
          </div>

          {/* bottom panel */}
          <div className="mt-[10px] flex h-[780px] flex-col border-b border-[#a8a8a8]">
            <div className="flex h-[50px] items-stretch border-t border-[#b0b0b0]">
              <div className="flex w-[197px] items-center pl-[9px]">
                <Ic n="stacklines" s={26} />
                <span className="ml-[10px] pt-[3px] whitespace-nowrap">Stack Trace</span>
              </div>
              <div className="flex w-[208px] items-center rounded-t-[4px] border-x border-b border-[#a8a8a8] pl-[10px]">
                <Ic n="flame" s={30} />
                <span className="ml-[9px] pt-[3px] whitespace-nowrap">Flame View</span>
              </div>
              <div className="flex flex-1 items-center border-b border-[#a8a8a8] pb-[10px] pl-[2271px]">
                <Ic n="stepa" s={27} />
                <div className="ml-[11px]">
                  <Ic n="stepb" s={27} />
                </div>
                <div className="ml-[16px]">
                  <Ic n="stepc" s={27} />
                </div>
                <div className="ml-[8px] h-[36px] w-[1px] bg-[#c0c0c0]" />
                <div className="ml-[10px]">
                  <Ic n="tree" s={28} />
                </div>
                <div className="ml-[6px] mr-[6px] h-[36px] w-[1px] bg-[#c0c0c0]" />
                <Ic n="stopwatch" s={30} />
                <div className="ml-[6px] flex h-[38px] w-[40px] items-center justify-center border border-[#99d1ff] bg-[#cce8ff]">
                  <Ic n="method2" s={30} />
                </div>
                <div className="ml-[4px]">
                  <Ic n="gearplay" s={30} />
                </div>
                <div className="ml-[20px] mr-[23px]">
                  <Kebab />
                </div>
                <MinMax />
              </div>
            </div>
            <div className="ml-[3px] mt-[5px] flex h-[720px] overflow-hidden border border-[#a8a8a8] bg-white">
              <div className="min-w-0 flex-1">
                <div className="flex h-[53px] items-center pl-[8px] pt-[3px]">
                  <span className="w-[1292px] whitespace-nowrap">Stack Trace</span>
                  <span className="w-[155px] border-l border-[#eef0f6] pr-[3px] text-right leading-[50px]">Count</span>
                  <span className="w-[246px] pr-[6px] text-right">Percentage</span>
                </div>
                {stack.map(([text, count, pct, dark, light], i) => (
                  <div key={i} className="flex h-[45px] border-b border-[#ececec]">
                    <div className="flex w-[1300px] shrink-0">
                      <div className="flex w-[37px] shrink-0 items-center justify-center">
                        <svg viewBox="0 0 28 32" width={28} height={32}>
                          <path d="M12 2 4 13h5v17h6V13h5z" fill="#0a6cb4" />
                          {i < 3 && <path d="M12 17c8-3 12 3 13 12h-5c0-5-3-8-8-6z" fill="#2f8ad8" />}
                        </svg>
                      </div>
                      <div className={`flex flex-1 items-center overflow-hidden pl-[2px] pt-[3px] tracking-[0.05px] whitespace-nowrap ${i === 1 ? "bg-white" : "bg-[#fefff0]"}`}>{text}</div>
                    </div>
                    <div className="flex w-[155px] shrink-0 items-center justify-end pr-[2px] pt-[3px]">{count}</div>
                    <div className="relative ml-[8px] flex w-[238px] shrink-0">
                      <div className="h-full bg-[#64c864]" style={{ width: dark }} />
                      <div className="h-full bg-[#aaf5a0]" style={{ width: light }} />
                      <div className="absolute right-[7px] top-[3px] leading-[42px]">{pct} %</div>
                    </div>
                    <div className="w-[1px] bg-[#eef0f6]" />
                  </div>
                ))}
              </div>
              <div className="flex h-full w-[41px] shrink-0 flex-col items-center bg-[#f0f0f0]">
                <div className="flex h-[44px] items-end pb-[2px]">
                  <ChevY />
                </div>
                <div className="h-[137px] w-[38px] bg-[#cdcdcd]" />
                <div className="flex-1" />
                <div className="pb-[12px]">
                  <ChevY down />
                </div>
              </div>
            </div>
          </div>
        </div>
      </div>

      {/* status bar */}
      <div className="flex-1 pl-[3124px] pt-[12px]">
        <div className="h-[32px] border-l-2 border-dotted border-[#a8a8a0]" />
      </div>
    </div>
  );
}
